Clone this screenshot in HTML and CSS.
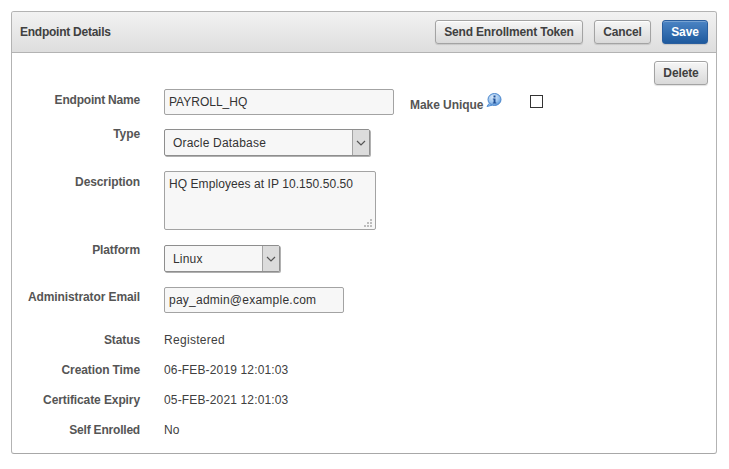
FILE: index.html
```html
<!DOCTYPE html>
<html lang="en">
<head>
<meta charset="utf-8">
<title>Endpoint Details</title>
<link rel="stylesheet" href="styles.css">
</head>
<body>
<section class="panel">
  <header class="panel-head">
    <h1 class="panel-title">Endpoint Details</h1>
    <div class="actions">
      <button class="btn btn-send" type="button">Send Enrollment Token</button>
      <button class="btn btn-cancel" type="button">Cancel</button>
      <button class="btn btn-save" type="button">Save</button>
    </div>
  </header>
  <div class="panel-body">
    <div class="toolbar"><button class="btn btn-delete" type="button">Delete</button></div>
    <form class="form">
      <div class="row row-name">
        <label class="label">Endpoint Name</label>
        <input class="field field-name" type="text" value="PAYROLL_HQ">
        <span class="unique-label">Make Unique</span>
        <svg class="info" width="16" height="15" viewBox="0 0 16 15" aria-hidden="true">
          <defs>
            <radialGradient id="ig" cx="40%" cy="30%" r="75%">
              <stop offset="0" stop-color="#dcebfb"/>
              <stop offset="0.6" stop-color="#9cc4ee"/>
              <stop offset="1" stop-color="#4f8fd6"/>
            </radialGradient>
          </defs>
          <path d="M3 10.5 L1 13.5 L6 12.2" fill="#8ab6e6" stroke="#4f8fd6" stroke-width="1" stroke-linejoin="round"/>
          <ellipse cx="8.5" cy="6.5" rx="6.5" ry="6" fill="url(#ig)" stroke="#4a86cc" stroke-width="1"/>
          <rect x="7.5" y="2.5" width="2" height="2" fill="#1f4f96"/>
          <path d="M6.8 5.5H9.5V9.5H10.3V10.5H6.8V9.5H7.6V6.5H6.8Z" fill="#1f4f96"/>
        </svg>
        <input class="check" type="checkbox" aria-label="Make Unique">
      </div>
      <div class="row row-type">
        <label class="label">Type</label>
        <div class="select select-type"><span class="select-text">Oracle Database</span><span class="select-arrow"><svg width="10" height="6" viewBox="0 0 10 6"><path d="M1 1L5 5L9 1" fill="none" stroke="#555" stroke-width="1.2"/></svg></span></div>
      </div>
      <div class="row row-desc">
        <label class="label">Description</label>
        <div class="desc-wrap">
          <textarea class="field field-desc">HQ Employees at IP 10.150.50.50</textarea>
          <svg class="grip" width="8" height="8" viewBox="0 0 8 8" aria-hidden="true"><path d="M6 0h2v2H6zM3 3h2v2H3zM6 3h2v2H6zM0 6h2v2H0zM3 6h2v2H3zM6 6h2v2H6z" fill="#bdbdbd"/></svg>
        </div>
      </div>
      <div class="row row-platform">
        <label class="label">Platform</label>
        <div class="select select-platform"><span class="select-text">Linux</span><span class="select-arrow"><svg width="10" height="6" viewBox="0 0 10 6"><path d="M1 1L5 5L9 1" fill="none" stroke="#555" stroke-width="1.2"/></svg></span></div>
      </div>
      <div class="row row-email">
        <label class="label">Administrator Email</label>
        <input class="field field-email" type="text" value="pay_admin@example.com">
      </div>
      <div class="static-rows">
        <div class="row static"><span class="label">Status</span><span class="value value-status">Registered</span></div>
        <div class="row static"><span class="label">Creation Time</span><span class="value">06-FEB-2019 12:01:03</span></div>
        <div class="row static"><span class="label">Certificate Expiry</span><span class="value">05-FEB-2021 12:01:03</span></div>
        <div class="row static"><span class="label label-tight">Self Enrolled</span><span class="value">No</span></div>
      </div>
    </form>
  </div>
</section>
</body>
</html>
```
FILE: styles.css
```css
* { box-sizing: border-box; }
html, body { margin: 0; padding: 0; background: #fff; }
body {
  width: 729px;
  height: 469px;
  padding: 11px 12px 0 11px;
  font-family: "Liberation Sans", Arial, sans-serif;
  font-size: 12px;
  color: #404040;
  overflow: hidden;
}
.panel {
  height: 443px;
  border: 1px solid #b3b3b3;
  border-bottom-color: #a8a8a8;
  border-radius: 3px;
  background: #fff;
}
.panel-head {
  height: 41px;
  display: flex;
  align-items: center;
  justify-content: space-between;
  padding: 0 8px 0 8px;
  background: linear-gradient(#f2f2f2, #dedede);
  border-bottom: 1px solid #b3b3b3;
  border-radius: 2px 2px 0 0;
}
.panel-title {
  margin: 0;
  font-size: 12px;
  font-weight: bold;
  letter-spacing: -0.25px;
  color: #404040;
}
.actions { display: flex; gap: 11px; }
.btn {
  height: 24px;
  padding: 0;
  font-family: inherit;
  font-size: 12px;
  font-weight: bold;
  letter-spacing: -0.12px;
  color: #404040;
  background: linear-gradient(#f6f6f6, #d9d9d9);
  border: 1px solid #a3a3a3;
  border-radius: 3px;
  box-shadow: inset 0 1px 0 #fff, 0 1px 1px rgba(0,0,0,.12);
}
.btn-send { width: 148px; letter-spacing: -0.17px; }
.btn-cancel { width: 57px; }
.btn-save {
  width: 46px;
  color: #fff;
  background: linear-gradient(#4b84c4, #1f5a9e);
  border-color: #2a5e9e;
  box-shadow: inset 0 1px 0 rgba(255,255,255,.25), 0 1px 1px rgba(0,0,0,.12);
}
.btn-delete { width: 54px; }
.panel-body { padding: 8px 8px 0 0; }
.toolbar { display: flex; justify-content: flex-end; margin-bottom: 4px; }
.form { display: flex; flex-direction: column; gap: 15px; }
.row { display: flex; align-items: flex-start; }
.row-name { margin-bottom: -1px; }
.label {
  width: 128px;
  margin-right: 24px;
  flex: none;
  text-align: right;
  font-weight: bold;
  letter-spacing: -0.1px;
  color: #555;
  line-height: 14px;
}
.label-tight { letter-spacing: -0.2px; }
.row-name .label { margin-top: 4px; letter-spacing: -0.2px; }
.row-type .label { margin-top: -2px; }
.row-desc .label { margin-top: 4px; }
.row-platform .label { margin-top: -2px; }
.row-email .label { margin-top: 3px; }
.field {
  display: block;
  margin: 0;
  padding: 0 4px;
  font-family: inherit;
  font-size: 12px;
  color: #333;
  background: #f7f7f7;
  border: 1px solid #a3a3a3;
  border-radius: 2px;
  outline: none;
}
.field-name { width: 230px; height: 26px; }
.field-email { width: 180px; height: 26px; letter-spacing: 0.24px; }
.desc-wrap { position: relative; width: 212px; height: 59px; }
.field-desc {
  width: 212px;
  height: 59px;
  padding: 5px 4px;
  line-height: 14px;
  letter-spacing: 0.07px;
  resize: none;
}
.grip { position: absolute; right: 4px; bottom: 3px; }
.unique-label {
  margin-left: 16px;
  padding-top: 9px;
  font-weight: bold;
  letter-spacing: -0.05px;
  color: #555;
  line-height: 14px;
}
.info { margin: 4px 0 0 3px; flex: none; }
.check {
  appearance: none;
  width: 13px;
  height: 13px;
  margin: 6px 0 0 28px;
  background: #fff;
  border: 1px solid #333;
  border-radius: 0;
}
.select {
  display: flex;
  height: 27px;
  background: #f7f7f7;
  border: 1px solid #8e8e8e;
  border-radius: 2px;
  box-shadow: 1px 1px 0 #b0b0b0;
}
.select-type { width: 206px; }
.select-platform { width: 116px; }
.select-text {
  flex: 1;
  padding: 1px 0 0 8px;
  line-height: 25px;
  letter-spacing: 0.2px;
  color: #333;
}
.select-arrow {
  width: 17px;
  display: flex;
  align-items: center;
  justify-content: center;
  background: #dcdcdc;
  border-left: 1px solid #a3a3a3;
}
.static-rows { display: flex; flex-direction: column; gap: 16px; padding-top: 5px; }
.static { line-height: 14px; }
.value { color: #404040; letter-spacing: 0.15px; }
.value-status { letter-spacing: 0.3px; }
```
